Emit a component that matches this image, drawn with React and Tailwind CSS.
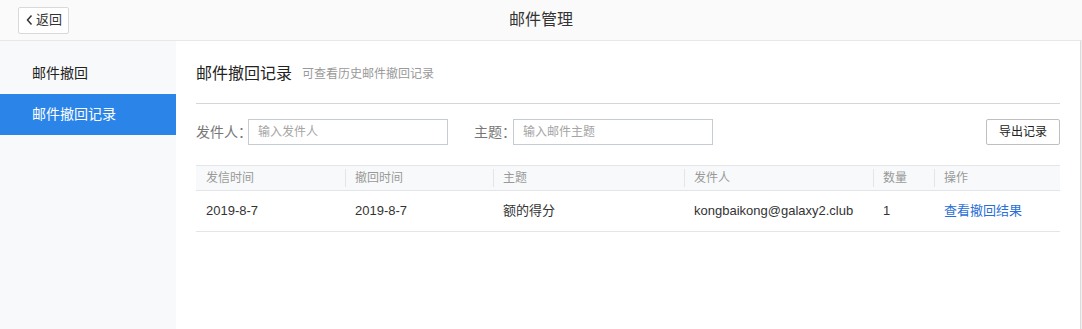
const columns = [
  { key: "sendTime", title: "发信时间", width: "w-[149px]" },
  { key: "recallTime", title: "撤回时间", width: "w-[148px]" },
  { key: "subject", title: "主题", width: "w-[191px]" },
  { key: "sender", title: "发件人", width: "w-[189px]" },
  { key: "count", title: "数量", width: "w-[61px]" },
  { key: "action", title: "操作", width: "flex-1" },
];

const rows = [
  {
    sendTime: "2019-8-7",
    recallTime: "2019-8-7",
    subject: "额的得分",
    sender: "kongbaikong@galaxy2.club",
    count: "1",
  },
];

const App = () => {
  return (
    <div
      className="w-[1082px] h-[329px] flex flex-col bg-white overflow-hidden"
      style={{ fontFamily: '"Liberation Sans", "Noto Sans CJK SC", sans-serif' }}
    >
      {/* header */}
      <header className="h-[41px] shrink-0 flex items-center relative bg-[#fafafa] border-b border-[#e8e8e8]">
        <button className="ml-[18px] w-[51px] h-[27px] flex items-center justify-center gap-[1px] bg-white border border-[#d9d9d9] rounded-[2px] text-[13px] text-[#333]">
          <svg width="10" height="12" viewBox="0 0 10 12" fill="none">
            <path d="M6.5 1.5 L2.5 6 L6.5 10.5" stroke="#333" strokeWidth="1.5" />
          </svg>
          返回
        </button>
        <h1 className="absolute left-1/2 -translate-x-1/2 text-[16px] text-[#333]">邮件管理</h1>
      </header>

      <div className="flex flex-1">
        {/* sidebar */}
        <aside className="w-[176px] shrink-0 bg-[#f8f9fb] pt-[12px]">
          <div className="h-[41px] pl-[32px] flex items-center text-[14px] text-[#222]">邮件撤回</div>
          <div className="h-[41px] pl-[32px] flex items-center text-[14px] text-white bg-[#2b85e8]">邮件撤回记录</div>
        </aside>

        {/* main */}
        <main className="flex-1 px-[20px] pt-[20px]">
          <div className="h-[26px] flex items-center gap-[10px]">
            <h2 className="text-[16px] text-[#222]">邮件撤回记录</h2>
            <span className="text-[12px] text-[#999]">可查看历史邮件撤回记录</span>
          </div>
          <div className="mt-[16px] border-t border-[#d6d6d6]" />

          <div className="mt-[15px] flex items-center h-[26px]">
            <label className="w-[52px] shrink-0 text-[14px] text-[#777] whitespace-nowrap">发件人：</label>
            <input
              className="w-[200px] h-[26px] border border-[#c7ccd3] px-[9px] text-[12px] outline-none placeholder:text-[#a5a5a5]"
              placeholder="输入发件人"
            />
            <label className="ml-[26px] w-[39px] shrink-0 text-[14px] text-[#777] whitespace-nowrap">主题：</label>
            <input
              className="w-[200px] h-[26px] border border-[#c7ccd3] px-[9px] text-[12px] outline-none placeholder:text-[#a5a5a5]"
              placeholder="输入邮件主题"
            />
            <button className="ml-auto w-[74px] h-[26px] border border-[#bfbfbf] rounded-[2px] bg-white text-[12px] text-[#222]">
              导出记录
            </button>
          </div>

          {/* table */}
          <div className="mt-[20px]">
            <div className="flex h-[26px] bg-[#f8f9fa] border-t border-b border-[#e3e5e8]">
              {columns.map((col, i) => (
                <div key={col.key} className={`${col.width} flex items-center relative pl-[10px] text-[12px] text-[#999]`}>
                  {i > 0 && <span className="absolute left-0 top-[3px] bottom-[3px] border-l border-[#e3e5e8]" />}
                  {col.title}
                </div>
              ))}
            </div>
            {rows.map((row, r) => (
              <div key={r} className="flex h-[41px] border-b border-[#e3e5e8] text-[13px] text-[#333]">
                {columns.map((col) => (
                  <div key={col.key} className={`${col.width} flex items-center pl-[10px]`}>
                    {col.key === "action" ? (
                      <a className="text-[#2a6fd6] cursor-pointer">查看撤回结果</a>
                    ) : (
                      row[col.key]
                    )}
                  </div>
                ))}
              </div>
            ))}
          </div>
        </main>

        {/* scrollbar strip */}
        <div className="w-[2px] shrink-0 border-l border-[#dcdcdc] bg-[#f0f0f0]" />
      </div>
    </div>
  );
};

export default App;
